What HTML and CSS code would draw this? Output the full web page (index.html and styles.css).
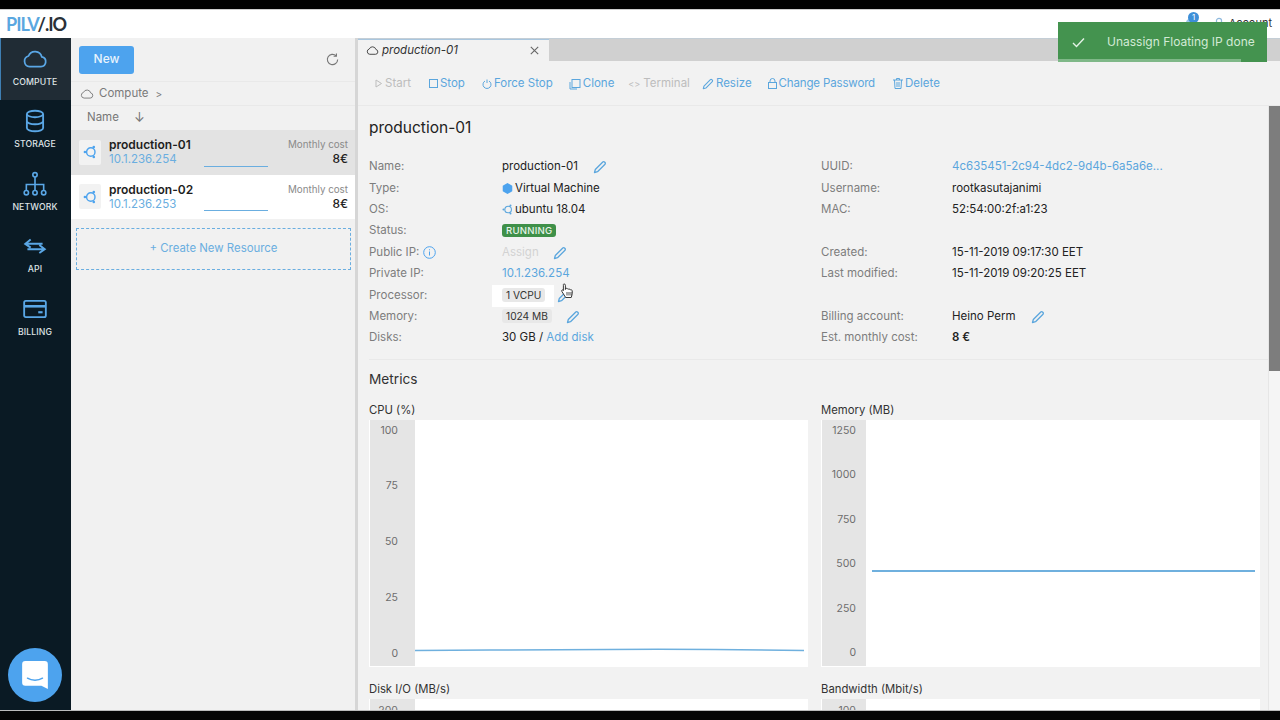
FILE: index.html
```html
<!DOCTYPE html>
<html lang="en">
<head>
<meta charset="utf-8">
<title>PILW.IO</title>
<link rel="stylesheet" href="styles.css">
</head>
<body>
<svg class="defs" width="0" height="0" aria-hidden="true">
  <symbol id="i-cloud" viewBox="0 0 24 24"><path d="M7 19h10.5a4.5 4.5 0 0 0 .8-8.9A6.5 6.5 0 0 0 6 9.2 5 5 0 0 0 7 19z" fill="none" stroke="currentColor" stroke-width="1.6" stroke-linejoin="round"/></symbol>
  <symbol id="i-pencil" viewBox="0 0 14 14"><path d="M1.500 12.500l.8-3L9.800 2a1.200 1.200 0 0 1 1.700 0l.5.5a1.200 1.200 0 0 1 0 1.700L4.500 11.700z" fill="none" stroke="currentColor" stroke-width="1.300" stroke-linejoin="round"/></symbol>
  <symbol id="i-ubuntu" viewBox="0 0 14 14"><circle cx="7.800" cy="7" r="4.200" fill="none" stroke="currentColor" stroke-width="1.400"/><circle cx="1.900" cy="7" r="1.300" fill="currentColor"/><circle cx="10.800" cy="2" r="1.300" fill="currentColor"/><circle cx="10.800" cy="12" r="1.300" fill="currentColor"/></symbol>
</svg>

<div class="topbar"></div>
<header class="header">
  <div class="logo"><span class="logo-blue">PILV</span><span class="logo-dark">/.IO</span></div>
  <div class="account">
    <span class="bell"><svg width="14" height="14" viewBox="0 0 14 14"><path d="M7 2a4 4 0 0 0-4 4v3l-1 2h10l-1-2V6a4 4 0 0 0-4-4z" fill="#9cc6ea"/></svg><span class="badge">1</span></span>
    <svg class="person" width="12" height="14" viewBox="0 0 12 14"><circle cx="6" cy="4" r="2.600" fill="none" stroke="#8fb9dd" stroke-width="1.200"/><path d="M1 13c0-3 2-4.500 5-4.500s5 1.500 5 4.500" fill="none" stroke="#8fb9dd" stroke-width="1.200"/></svg>
    <span class="account-name">Account</span>
  </div>
</header>

<div class="app">
  <nav class="sidebar">
    <a class="nav-item active">
      <svg class="nav-icon" width="26" height="26"><use href="#i-cloud"/></svg>
      <span>COMPUTE</span>
    </a>
    <a class="nav-item">
      <svg class="nav-icon" width="26" height="26" viewBox="0 0 24 24" fill="none" stroke="currentColor" stroke-width="1.700"><ellipse cx="12" cy="5.500" rx="7.500" ry="3"/><path d="M4.500 5.500v13c0 1.700 3.400 3 7.500 3s7.500-1.300 7.500-3v-13M4.500 12c0 1.700 3.400 3 7.500 3s7.500-1.300 7.500-3"/></svg>
      <span>STORAGE</span>
    </a>
    <a class="nav-item">
      <svg class="nav-icon" width="26" height="26" viewBox="0 0 24 24" fill="none" stroke="currentColor" stroke-width="1.500"><circle cx="12" cy="3.500" r="2"/><circle cx="4" cy="20" r="2"/><circle cx="12" cy="20" r="2"/><circle cx="20" cy="20" r="2"/><path d="M12 5.500V18M4 18v-5.500h16V18"/></svg>
      <span>NETWORK</span>
    </a>
    <a class="nav-item">
      <svg class="nav-icon" width="26" height="26" viewBox="0 0 24 24" fill="none" stroke="currentColor" stroke-width="1.800"><path d="M8 6L3 10l5 3.500M3 10h16M16 11l5 4-5 3.500M21 15H5"/></svg>
      <span>API</span>
    </a>
    <a class="nav-item">
      <svg class="nav-icon" width="26" height="26" viewBox="0 0 24 24" fill="none" stroke="currentColor" stroke-width="1.700"><rect x="2" y="4.500" width="20" height="15" rx="1.500"/><path d="M2 9.500h20" stroke-width="2.400"/><path d="M15 15h4" stroke-width="2"/></svg>
      <span>BILLING</span>
    </a>
    <button class="chat" aria-label="Chat">
      <svg width="28" height="30" viewBox="0 0 26 28"><path d="M4 1h18a3 3 0 0 1 3 3v23l-6-3H4a3 3 0 0 1-3-3V4a3 3 0 0 1 3-3z" fill="#fff"/><path d="M6 17c4 2.500 10 2.500 14 0" fill="none" stroke="#4da3ee" stroke-width="1.400" stroke-linecap="round"/></svg>
    </button>
  </nav>

  <aside class="list-panel">
    <div class="list-actions">
      <button class="btn-new">New</button>
      <svg class="refresh" width="15" height="15" viewBox="0 0 16 16" fill="none" stroke="#777" stroke-width="1.200"><path d="M13.500 8a5.500 5.500 0 1 1-1.700-4"/><path d="M12.200 1.500v3h-3" stroke-linejoin="round"/></svg>
    </div>
    <div class="crumbs">
      <svg width="14" height="14"><use href="#i-cloud"/></svg>
      <span>Compute</span>
      <span class="crumb-sep">&gt;</span>
    </div>
    <div class="sort"><span>Name</span><span class="sort-arrow">↓</span></div>
    <div class="res-row selected">
      <span class="res-icon"><svg width="14" height="14"><use href="#i-ubuntu"/></svg></span>
      <div class="res-main"><strong>production-01</strong><span class="res-ip">10.1.236.254</span></div>
      <span class="spark"></span>
      <div class="res-cost"><span>Monthly cost</span><b>8€</b></div>
    </div>
    <div class="res-row">
      <span class="res-icon"><svg width="14" height="14"><use href="#i-ubuntu"/></svg></span>
      <div class="res-main"><strong>production-02</strong><span class="res-ip">10.1.236.253</span></div>
      <span class="spark"></span>
      <div class="res-cost"><span>Monthly cost</span><b>8€</b></div>
    </div>
    <div class="create">+ Create New Resource</div>
  </aside>

  <main class="main">
    <div class="tabs">
      <div class="tab">
        <svg width="13" height="13"><use href="#i-cloud"/></svg>
        <em>production-01</em>
        <svg class="tab-close" width="9" height="9" viewBox="0 0 9 9" fill="none" stroke="#666" stroke-width="1.100"><path d="M.8.800l7.400 7.400M8.200.800L.8 8.200"/></svg>
      </div>
    </div>
    <div class="toolbar">
      <a class="tool off t-start"><svg width="8" height="9" viewBox="0 0 8 9"><path d="M1 1l5.500 3.500L1 8z" fill="none" stroke="currentColor"/></svg>Start</a>
      <a class="tool t-stop"><svg width="9" height="9" viewBox="0 0 9 9"><rect x=".5" y=".5" width="8" height="8" fill="none" stroke="currentColor"/></svg>Stop</a>
      <a class="tool t-force"><svg width="10" height="10" viewBox="0 0 10 10" fill="none" stroke="currentColor"><path d="M3 2a4 4 0 1 0 4 0M5 .5V4"/></svg>Force Stop</a>
      <a class="tool t-clone"><svg width="12" height="12" viewBox="0 0 12 12" fill="none" stroke="currentColor"><rect x="3" y="1.500" width="8" height="8"/><path d="M1 4v7h7"/></svg>Clone</a>
      <a class="tool off t-term"><span class="code">&lt;&gt;</span>Terminal</a>
      <a class="tool t-resize"><svg width="12" height="12"><use href="#i-pencil"/></svg>Resize</a>
      <a class="tool t-pass"><svg width="9" height="11" viewBox="0 0 9 11" fill="none" stroke="currentColor"><rect x=".5" y="4.500" width="8" height="6"/><path d="M2 4.500V3a2.500 2.500 0 0 1 5 0v1.500"/></svg>Change Password</a>
      <a class="tool"><svg width="10" height="11" viewBox="0 0 10 11" fill="none" stroke="currentColor"><path d="M0 2h10M3.500 2V.5h3V2M1.500 2l.5 8.500h6L8.500 2M4 4v5M6 4v5"/></svg>Delete</a>
    </div>
    <div class="workspace">
      <div class="content">
        <h1 class="title">production-01</h1>
        <div class="details">
          <div class="kv">
            <span class="k">Name:</span><span class="v">production-01<svg class="edit" width="14" height="14"><use href="#i-pencil"/></svg></span>
            <span class="k">Type:</span><span class="v"><svg class="vm" width="11" height="11" viewBox="0 0 12 12"><path d="M6 0l5.200 3v6L6 12 .8 9V3z" fill="#4da3ee"/></svg>Virtual Machine</span>
            <span class="k">OS:</span><span class="v"><svg class="vm ub" width="11" height="11"><use href="#i-ubuntu"/></svg>ubuntu 18.04</span>
            <span class="k">Status:</span><span class="v"><span class="status">RUNNING</span></span>
            <span class="k">Public IP:<svg class="info" width="13" height="13" viewBox="0 0 13 13" fill="none" stroke="#4da3ee"><circle cx="6.500" cy="6.500" r="5.800"/><path d="M6.500 5.500v4M6.500 3.300v1"/></svg></span><span class="v"><span class="muted">Assign</span><svg class="edit e-assign" width="14" height="14"><use href="#i-pencil"/></svg></span>
            <span class="k">Private IP:</span><span class="v link">10.1.236.254</span>
            <span class="k">Processor:</span><span class="v"><span class="chip-hl"><span class="chip">1 VCPU</span></span><svg class="edit e-cpu" width="14" height="14"><use href="#i-pencil"/></svg></span>
            <span class="k">Memory:</span><span class="v"><span class="chip">1024 MB</span><svg class="edit e-mem" width="14" height="14"><use href="#i-pencil"/></svg></span>
            <span class="k">Disks:</span><span class="v">30 GB / <span class="link">Add disk</span></span>
          </div>
          <div class="kv right">
            <span class="k">UUID:</span><span class="v link">4c635451-2c94-4dc2-9d4b-6a5a6e...</span>
            <span class="k">Username:</span><span class="v">rootkasutajanimi</span>
            <span class="k">MAC:</span><span class="v">52:54:00:2f:a1:23</span>
            <span class="k"></span><span class="v"></span>
            <span class="k">Created:</span><span class="v">15-11-2019 09:17:30 EET</span>
            <span class="k">Last modified:</span><span class="v">15-11-2019 09:20:25 EET</span>
            <span class="k"></span><span class="v"></span>
            <span class="k">Billing account:</span><span class="v">Heino Perm<svg class="edit e-bill" width="14" height="14"><use href="#i-pencil"/></svg></span>
            <span class="k">Est. monthly cost:</span><span class="v"><b>8 €</b></span>
          </div>
        </div>
        <h2 class="metrics">Metrics</h2>
        <div class="charts">
          <section class="chart-block">
            <h3>CPU (%)</h3>
            <div class="chart">
              <div class="axis"><span>100</span><span>75</span><span>50</span><span>25</span><span>0</span></div>
              <svg class="plot" viewBox="0 0 393 247" preserveAspectRatio="none"><path d="M0 230.500C100 230 200 229 300 229.500L389 230.500" fill="none" stroke="#6fb0de" stroke-width="1.500"/></svg>
            </div>
          </section>
          <section class="chart-block">
            <h3>Memory (MB)</h3>
            <div class="chart">
              <div class="axis axis-wide"><span>1250</span><span>1000</span><span>750</span><span>500</span><span>250</span><span>0</span></div>
              <svg class="plot" viewBox="0 0 394 247" preserveAspectRatio="none"><path d="M6 151H389" fill="none" stroke="#6fb0de" stroke-width="1.800"/></svg>
            </div>
          </section>
          <section class="chart-block">
            <h3>Disk I/O (MB/s)</h3>
            <div class="chart">
              <div class="axis axis-low"><span>200</span></div>
            </div>
          </section>
          <section class="chart-block">
            <h3>Bandwidth (Mbit/s)</h3>
            <div class="chart">
              <div class="axis axis-wide axis-low"><span>100</span></div>
            </div>
          </section>
        </div>
      </div>
      <div class="scrollbar"><div class="thumb"></div></div>
    </div>
  </main>
</div>
<div class="bottombar"></div>

<div class="toast">
  <svg width="13" height="11" viewBox="0 0 13 11" fill="none" stroke="#e4f2e6" stroke-width="1.400"><path d="M1 6l3.500 3.500L12 1.500"/></svg>
  <span>Unassign Floating IP done</span>
  <i class="toast-progress"></i>
</div>
<svg class="cursor" width="13" height="16" viewBox="0 0 13 16"><path d="M3.200 1c.8 0 1.200.5 1.200 1.300v4.200l.2-1c.7-.4 1.400-.2 1.600.4.600-.4 1.400-.2 1.600.5.600-.4 1.500-.2 1.700.5.700-.3 1.500 0 1.700.8.300 1.600.1 3.600-.5 5.300l-.5 1.500H4.700L.9 8.500c-.5-.7-.1-1.500.5-1.600.6-.1 1 .2 1 .6V2.300C2.100 1.500 2.500 1 3.200 1z" fill="#fff" stroke="#222" stroke-width=".9" stroke-linejoin="round"/><path d="M6 9v3.500M8 9v3.500M10 9v3.500" stroke="#222" stroke-width=".8" fill="none"/></svg>
</body>
</html>
```
FILE: styles.css
```css
* { box-sizing: border-box; }
html, body { margin: 0; height: 720px; overflow: hidden; }
body {
  display: flex; flex-direction: column; position: relative;
  background: #000; color: #222;
  font: 11.5px/1.2 Inter, "Liberation Sans", sans-serif;
}
.defs { position: absolute; }
h1, h2, h3 { margin: 0; font-weight: 400; }
button { border: 0; font: inherit; }

.topbar { height: 9px; background: #000; flex: none; }
.bottombar { height: 10px; background: #050505; flex: none; border-top: 1px solid #bbb; }

.header {
  height: 29px; flex: none; background: #fff; border-top: 1px solid #ccc;
  display: flex; align-items: center; justify-content: space-between; padding: 0 8px 0 6px;
}
.logo { font: 700 18px/1 Lato, "Open Sans", sans-serif; letter-spacing: -1px; }
.logo-blue { color: #5aa7e0; }
.logo-dark { color: #2a3138; }
.account { display: flex; align-items: center; gap: 4px; position: relative; }
.bell { position: relative; width: 18px; height: 14px; margin-right: 7.500px; }
.badge {
  position: absolute; left: 5px; top: -5px; width: 11px; height: 11px; border-radius: 50%;
  background: #3d8fd8; color: #fff; font-size: 8px; line-height: 11px; text-align: center;
}
.account-name { color: #333; font-size: 11px; }

.app { flex: 1; min-height: 0; display: flex; }

.sidebar { width: 71px; flex: none; background: #0a1a24; display: flex; flex-direction: column; position: relative; }
.nav-item {
  height: 62.4px; flex: none; display: flex; flex-direction: column; align-items: center; padding: 8px 1px 0 0; gap: 5px;
  color: #dfe3e6; font-size: 8.700px; font-weight: 500; letter-spacing: .1px;
}
.nav-item.active { background: #202c35; border-left: 1px solid #3e7fb3; padding-right: 2px; }
.nav-icon { color: #5aa7e6; }
.chat {
  position: absolute; left: 8px; bottom: 8px; width: 54px; height: 54px; border-radius: 50%;
  background: #4da3ee; display: flex; align-items: center; justify-content: center; padding: 0;
}

.list-panel { width: 287px; flex: none; background: #f1f1f1; border-right: 3px solid #d6d6d6; display: flex; flex-direction: column; color: #777; }
.list-actions {
  height: 44px; flex: none; display: flex; align-items: center; justify-content: space-between;
  padding: 0 15px 0 8px; border-bottom: 1px solid #e9e9e9;
}
.btn-new { width: 55px; height: 28px; border-radius: 3px; background: #4da3ee; color: #e9f4fd; font-size: 12px; font-weight: 500; }
.crumbs {
  height: 24px; flex: none; display: flex; align-items: center; gap: 5px; padding: 1px 0 0 9px;
  border-bottom: 1px solid #e9e9e9; color: #7a7a7a;
}
.crumb-sep { margin-left: 2px; font-size: 10px; }
.sort { height: 24px; flex: none; display: flex; align-items: center; gap: 15px; padding-left: 16px; }
.sort-arrow { font-size: 13px; }
.res-row { height: 44.5px; flex: none; display: flex; align-items: center; background: #fff; padding: 0 7px 0 8px; position: relative; }
.res-row.selected { background: #e3e3e3; }
.res-icon {
  width: 22px; height: 25px; border-radius: 2px; background: #f2f2f2; color: #4da3ee;
  display: flex; align-items: center; justify-content: center; margin-right: 8px;
}
.res-main { display: flex; flex-direction: column; line-height: 14px; width: 95px; }
.res-main strong { color: #1d1d1d; font-weight: 600; font-size: 12px; }
.res-ip { color: #6aaee0; }
.spark { width: 64px; height: 1px; background: #6aaee0; align-self: flex-end; margin-bottom: 8px; }
.res-cost { margin-left: auto; display: flex; flex-direction: column; align-items: flex-end; line-height: 14px; font-size: 9.800px; color: #8a8a8a; }
.res-cost b { font-weight: 500; color: #222; font-size: 12px; }
.create {
  margin: 9px 4px 0 5px; height: 42px; flex: none; display: flex; align-items: center; justify-content: center;
  border: 1px dashed #6aaee0; color: #6aaee0; font-size: 11.400px;
}

.main { flex: 1; min-width: 0; display: flex; flex-direction: column; background: #f2f2f2; }
.tabs { height: 23px; flex: none; background: #d0d0d0; display: flex; border-top: 1px solid #c4ced6; }
.tab {
  width: 191px; display: flex; align-items: center; gap: 3px; padding: 0 10px 0 8px;
  background: #f2f2f2; border-top: 1px solid #a9c6de; color: #333;
}
.tab-close { margin-left: auto; }
.toolbar { height: 45px; flex: none; display: flex; align-items: center; padding: 2px 0 0 17px; border-bottom: 1px solid #e9e9e9; }
.tool { display: flex; align-items: center; gap: 2px; margin-right: 14px; color: #5ba6dd; }
.tool.off { color: #bdbdbd; }
.t-start { margin-right: 18px; }
.t-stop { margin-right: 17px; }
.t-force { margin-right: 16px; }
.t-term { margin-right: 12px; }
.t-resize { margin-right: 16px; }
.t-pass { margin-right: 18px; letter-spacing: -.15px; }
.code { font-size: 9px; margin-right: 1px; }

.workspace { flex: 1; min-height: 0; display: flex; overflow: hidden; }
.content { flex: 1; min-width: 0; padding: 12px 8px 0 11px; }
.scrollbar { width: 12px; flex: none; background: #f5f5f5; border-left: 1px solid #e6e6e6; }
.thumb { height: 265px; background: #7d7d7d; }
.title { font-size: 15.500px; line-height: 19px; color: #222; margin-bottom: 19.500px; }

.details { display: grid; grid-template-columns: 452px 1fr; padding-bottom: 10px; border-bottom: 1px solid #e9e9e9; margin-right: -8px; }
.kv { display: grid; grid-template-columns: 133px 1fr; grid-auto-rows: 21.400px; align-items: center; }
.kv.right { grid-template-columns: 131px 1fr; }
.k { color: #7d7d7d; display: flex; align-items: center; }
.v { color: #222; display: flex; align-items: center; white-space: pre; }
.v.link, .link { color: #5ba6dd; }
.v b { font-weight: 600; }
.edit { color: #5ba6dd; margin-left: 15px; }
.e-assign { margin-left: 14px; }
.e-cpu { margin-left: 3px; }
.e-mem { margin-left: 14px; }
.vm { margin-right: 2px; }
.ub { color: #5ba6dd; }
.info { margin-left: 4px; }
.status {
  background: #3f9049; color: #e8f4ea; border-radius: 3px; padding: 0 4px; margin-bottom: 2px; font-size: 9.600px; line-height: 13px; font-weight: 500; letter-spacing: .2px;
}
.muted { color: #d2d2d2; }
.chip-hl { background: #fff; margin-left: -10px; padding: 3px 9px 5px 10px; display: inline-flex; }
.chip { background: #e8e8e8; border-radius: 3px; padding: 0 4px; margin-bottom: 2px; font-size: 10.200px; line-height: 14px; color: #333; }
.chip-hl .chip { margin-bottom: 0; }

.metrics { font-size: 13.700px; line-height: 17px; color: #333; margin: 10.500px 0 15px; }
.charts { display: grid; grid-template-columns: 439px 439px; column-gap: 13px; row-gap: 15px; }
.chart-block h3 { font-size: 11.300px; line-height: 15px; margin-bottom: 2px; color: #333; }
.chart { height: 247px; display: flex; background: #fff; padding-left: 1px; overflow: hidden; }
.axis {
  width: 45px; flex: none; background: #e5e5e5; display: flex; flex-direction: column; justify-content: space-between; align-items: flex-end;
  padding: 4px 17px 6px 0; color: #6d6d6d; font-size: 10.500px; line-height: 13px; margin-bottom: 1px;
}
.axis-wide { width: 44px; padding-right: 10px; }
.axis-low { padding-top: 5px; }
.plot { flex: 1; min-width: 0; height: 100%; display: block; }

.toast {
  position: absolute; left: 1058px; top: 22px; width: 209px; height: 40px; background: #44934f; color: #d3ead6;
  display: flex; align-items: center; padding: 1px 0 0 14px; gap: 22px; font-size: 12px;
}
.toast-progress { position: absolute; left: 0; bottom: 0; width: 183px; height: 3px; background: #7fb888; }
.cursor { position: absolute; left: 561px; top: 283px; }
```
